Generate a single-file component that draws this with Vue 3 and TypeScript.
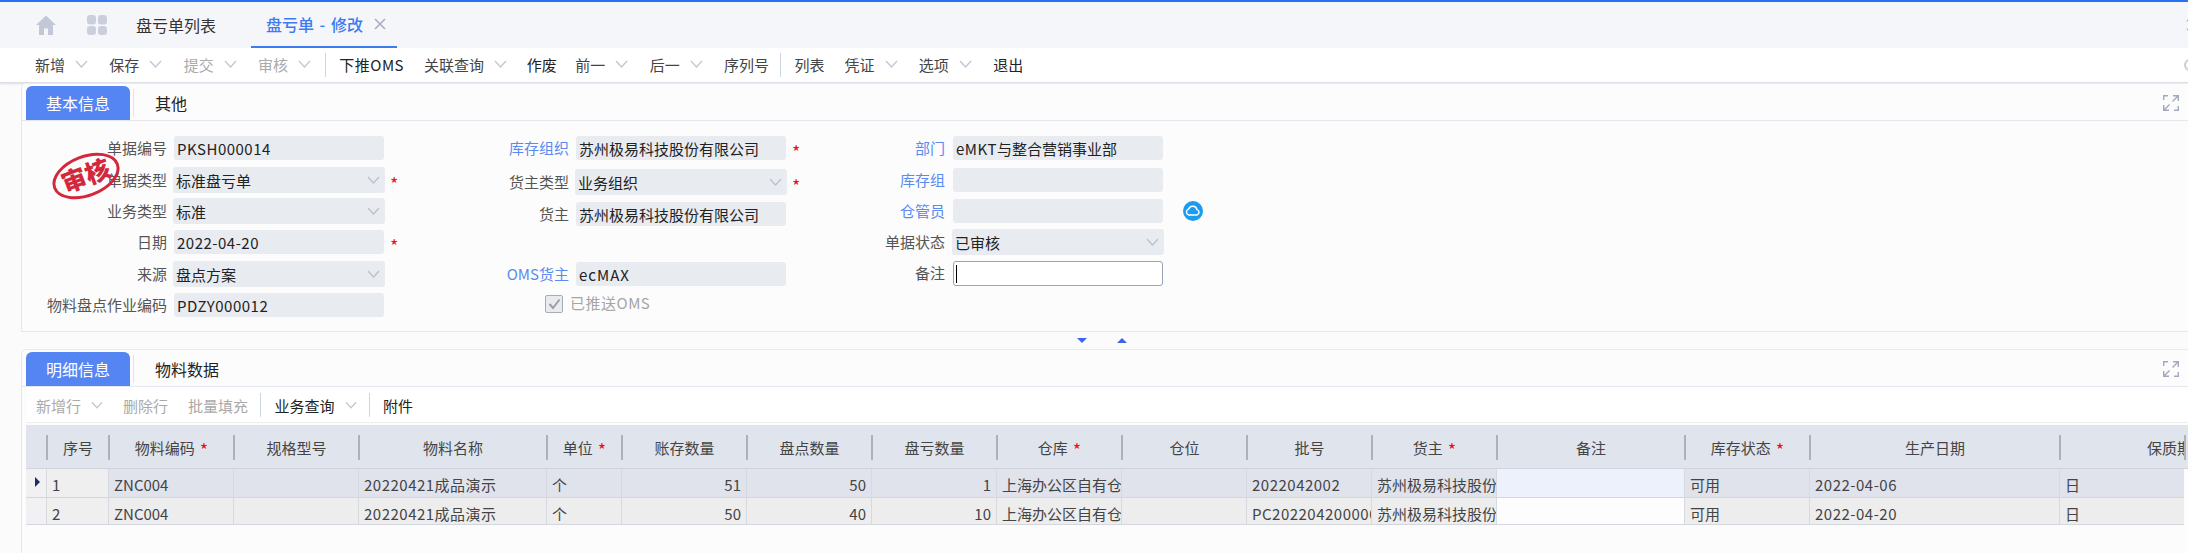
<script setup lang="ts">
interface ToolItem {
  text?: string
  caret?: boolean
  off?: boolean
  strong?: boolean
  wide?: boolean
  tight?: boolean
  sep?: boolean
}

interface Column {
  key: string
  title: string
  width: number
  req?: boolean
  right?: boolean
  wide?: boolean
}

type Row = Record<string, string>

const mainTools: ToolItem[] = [
  { text: '新增', caret: true },
  { text: '保存', caret: true },
  { text: '提交', caret: true, off: true },
  { text: '审核', caret: true, off: true },
  { sep: true },
  { text: '下推OMS', strong: true, wide: true },
  { text: '关联查询', caret: true, tight: true },
  { text: '作废', strong: true, tight: true },
  { text: '前一', caret: true },
  { text: '后一', caret: true },
  { text: '序列号', tight: true },
  { sep: true },
  { text: '列表' },
  { text: '凭证', caret: true },
  { text: '选项', caret: true },
  { text: '退出', strong: true },
]

const detailTools: ToolItem[] = [
  { text: '新增行', caret: true, off: true },
  { text: '删除行', off: true },
  { text: '批量填充', off: true },
  { sep: true },
  { text: '业务查询', caret: true, strong: true },
  { sep: true },
  { text: '附件', strong: true },
]

const columns: Column[] = [
  { key: 'no', title: '序号', width: 62 },
  { key: 'code', title: '物料编码', width: 125, req: true },
  { key: 'spec', title: '规格型号', width: 125 },
  { key: 'name', title: '物料名称', width: 188, wide: true },
  { key: 'unit', title: '单位', width: 75, req: true },
  { key: 'book', title: '账存数量', width: 125, right: true },
  { key: 'count', title: '盘点数量', width: 125, right: true },
  { key: 'loss', title: '盘亏数量', width: 125, right: true },
  { key: 'wh', title: '仓库', width: 125, req: true },
  { key: 'loc', title: '仓位', width: 125 },
  { key: 'batch', title: '批号', width: 125, wide: true },
  { key: 'owner', title: '货主', width: 125, req: true },
  { key: 'note', title: '备注', width: 188 },
  { key: 'status', title: '库存状态', width: 125, req: true },
  { key: 'made', title: '生产日期', width: 250, wide: true },
  { key: 'life', title: '保质期', width: 125 },
]

const rows: Row[] = [
  {
    no: '1', code: 'ZNC004', spec: '', name: '20220421成品演示', unit: '个', book: '51', count: '50', loss: '1',
    wh: '上海办公区自有仓库', loc: '', batch: '2022042002', owner: '苏州极易科技股份有限公司', note: '',
    status: '可用', made: '2022-04-06', life: '日',
  },
  {
    no: '2', code: 'ZNC004', spec: '', name: '20220421成品演示', unit: '个', book: '50', count: '40', loss: '10',
    wh: '上海办公区自有仓库', loc: '', batch: 'PC20220420000001', owner: '苏州极易科技股份有限公司', note: '',
    status: '可用', made: '2022-04-20', life: '日',
  },
]

const gridColumns = '20px ' + columns.map((c) => c.width + 'px').join(' ')
</script>

<template>
  <div class="page">
    <header class="topbar">
      <svg class="home" width="20" height="20" viewBox="0 0 20 20">
        <path d="M10 0.5 L20 10 L17 10 L17 20 L12 20 L12 13.5 L8 13.5 L8 20 L3 20 L3 10 L0 10 Z" fill="#c4c8d6" />
      </svg>
      <svg class="apps" width="20" height="20" viewBox="0 0 20 20">
        <rect x="0" y="0" width="9" height="9.5" rx="3" fill="#cbcfdb" />
        <rect x="11" y="0" width="9" height="9.5" rx="3" fill="#cbcfdb" />
        <rect x="0" y="11" width="9" height="9" rx="3" fill="#cbcfdb" />
        <rect x="11" y="11" width="9" height="9" rx="3" fill="#cbcfdb" />
      </svg>
      <span class="page-tab">盘亏单列表</span>
      <span class="page-tab active">
        盘亏单 - 修改
        <svg width="12" height="12" viewBox="0 0 12 12">
          <path d="M1 1 L11 11 M11 1 L1 11" stroke="#a9afc0" stroke-width="1.6" fill="none" />
        </svg>
      </span>
      <svg class="edge" width="8" height="12" viewBox="0 0 8 12">
        <path d="M1 1 L6 6 L1 11" stroke="#a9afc0" stroke-width="1.4" fill="none" />
      </svg>
    </header>

    <nav class="toolbar main-tools">
      <template v-for="(tool, i) in mainTools" :key="i">
        <i v-if="tool.sep" class="tool-sep" />
        <span v-else class="tool" :class="{ off: tool.off, strong: tool.strong, wide: tool.wide, tight: tool.tight }">
          {{ tool.text }}
          <svg v-if="tool.caret" class="caret" width="13" height="8" viewBox="0 0 13 8">
            <path d="M1 1 L6.5 7 L12 1" stroke="#c3c8d6" stroke-width="1.4" fill="none" />
          </svg>
        </span>
      </template>
      <i class="edge-ring" />
    </nav>

    <section class="panel">
      <div class="panel-tabs">
        <span class="panel-tab active">基本信息</span>
        <i class="tab-sep" />
        <span class="panel-tab">其他</span>
        <svg class="expand" width="16" height="16" viewBox="0 0 16 16">
          <path d="M0.7 5 V0.7 H5 M15.3 11 V15.3 H11" stroke="#a3a8bb" stroke-width="1.4" fill="none" />
          <path d="M10 0.7 H15.3 V6 M15 1 L9.5 6.5 M6 15.3 H0.7 V10 M1 15 L6.5 9.5" stroke="#a3a8bb" stroke-width="1.4" fill="none" />
        </svg>
      </div>

      <div class="form">
        <svg class="stamp" width="76" height="56" viewBox="0 0 76 56">
          <g transform="rotate(-21 38 28)">
            <ellipse cx="38" cy="28" rx="33.5" ry="19.5" fill="none" stroke="#d3283c" stroke-width="3" />
            <text x="38" y="37" text-anchor="middle" font-size="25" font-weight="900" fill="#d3283c" font-family="'Noto Sans CJK SC', sans-serif">审核</text>
          </g>
        </svg>

        <div class="col col-a">
          <div class="field"><label>单据编号</label><div class="input latin">PKSH000014</div></div>
          <div class="field">
            <label>单据类型</label>
            <div class="input select">标准盘亏单<svg width="13" height="8" viewBox="0 0 13 8"><path d="M1 1 L6.5 7 L12 1" stroke="#bcc1d0" stroke-width="1.4" fill="none" /></svg></div>
            <b class="star">*</b>
          </div>
          <div class="field">
            <label>业务类型</label>
            <div class="input select">标准<svg width="13" height="8" viewBox="0 0 13 8"><path d="M1 1 L6.5 7 L12 1" stroke="#bcc1d0" stroke-width="1.4" fill="none" /></svg></div>
          </div>
          <div class="field"><label>日期</label><div class="input latin">2022-04-20</div><b class="star">*</b></div>
          <div class="field">
            <label>来源</label>
            <div class="input select">盘点方案<svg width="13" height="8" viewBox="0 0 13 8"><path d="M1 1 L6.5 7 L12 1" stroke="#bcc1d0" stroke-width="1.4" fill="none" /></svg></div>
          </div>
          <div class="field"><label>物料盘点作业编码</label><div class="input latin">PDZY000012</div></div>
        </div>

        <div class="col col-b">
          <div class="field"><label class="link">库存组织</label><div class="input">苏州极易科技股份有限公司</div><b class="star">*</b></div>
          <div class="field">
            <label>货主类型</label>
            <div class="input select">业务组织<svg width="13" height="8" viewBox="0 0 13 8"><path d="M1 1 L6.5 7 L12 1" stroke="#bcc1d0" stroke-width="1.4" fill="none" /></svg></div>
            <b class="star">*</b>
          </div>
          <div class="field"><label>货主</label><div class="input">苏州极易科技股份有限公司</div></div>
          <div class="field" />
          <div class="field"><label class="link">OMS货主</label><div class="input latin-wide">ecMAX</div></div>
          <div class="check-row">
            <span class="check">
              <svg width="13" height="12" viewBox="0 0 13 12"><path d="M1.5 6 L5 10 L11.5 1.5" stroke="#9a9ea8" stroke-width="2" fill="none" /></svg>
            </span>
            <span class="check-text">已推送OMS</span>
          </div>
        </div>

        <div class="col col-c">
          <div class="field"><label class="link">部门</label><div class="input"><span><span class="latin">eMKT</span>与整合营销事业部</span></div></div>
          <div class="field"><label class="link">库存组</label><div class="input" /></div>
          <div class="field">
            <label class="link">仓管员</label>
            <div class="input" />
            <svg class="cloud" width="20" height="20" viewBox="0 0 20 20">
              <circle cx="10" cy="10" r="10" fill="#1c9cf0" />
              <path d="M6 14 A3 3 0 0 1 5.6 8.2 A4.4 4.4 0 0 1 14 8.6 A2.8 2.8 0 0 1 14 14 Z" fill="none" stroke="#fff" stroke-width="1.4" />
            </svg>
          </div>
          <div class="field">
            <label>单据状态</label>
            <div class="input select">已审核<svg width="13" height="8" viewBox="0 0 13 8"><path d="M1 1 L6.5 7 L12 1" stroke="#bcc1d0" stroke-width="1.4" fill="none" /></svg></div>
          </div>
          <div class="field">
            <label>备注</label>
            <div class="input editing"><i class="cursor" /></div>
          </div>
        </div>
      </div>
    </section>

    <div class="splitter">
      <i class="tri down" />
      <i class="tri up" />
    </div>

    <section class="panel detail">
      <div class="panel-tabs">
        <span class="panel-tab active">明细信息</span>
        <i class="tab-sep" />
        <span class="panel-tab">物料数据</span>
        <svg class="expand" width="16" height="16" viewBox="0 0 16 16">
          <path d="M0.7 5 V0.7 H5 M15.3 11 V15.3 H11" stroke="#a3a8bb" stroke-width="1.4" fill="none" />
          <path d="M10 0.7 H15.3 V6 M15 1 L9.5 6.5 M6 15.3 H0.7 V10 M1 15 L6.5 9.5" stroke="#a3a8bb" stroke-width="1.4" fill="none" />
        </svg>
      </div>

      <nav class="toolbar detail-tools">
        <template v-for="(tool, i) in detailTools" :key="i">
          <i v-if="tool.sep" class="tool-sep" />
          <span v-else class="tool" :class="{ off: tool.off, strong: tool.strong }">
            {{ tool.text }}
            <svg v-if="tool.caret" class="caret" width="13" height="8" viewBox="0 0 13 8">
              <path d="M1 1 L6.5 7 L12 1" stroke="#c3c8d6" stroke-width="1.4" fill="none" />
            </svg>
          </span>
        </template>
      </nav>

      <div class="grid">
        <div class="grid-head" :style="{ gridTemplateColumns: gridColumns + ' 3px' }">
          <div class="head-gutter" />
          <div v-for="col in columns" :key="col.key" class="head-cell" :class="{ last: col.key === 'life' }">
            {{ col.title }}<b v-if="col.req" class="req">*</b>
          </div>
          <div class="head-cell tail" />
        </div>
        <div
          v-for="(row, r) in rows"
          :key="r"
          class="grid-row"
          :class="{ current: r === 0 }"
          :style="{ gridTemplateColumns: gridColumns }"
        >
          <div class="gutter"><i v-if="r === 0" class="pointer" /></div>
          <div
            v-for="col in columns"
            :key="col.key"
            class="cell"
            :class="[{ right: col.right, wide: col.wide }, 'c-' + col.key]"
          >{{ row[col.key] }}</div>
        </div>
      </div>
    </section>
  </div>
</template>

<style>
html,
body {
  margin: 0;
  overflow: hidden;
  background: #fbfbfc;
}
</style>

<style scoped>
.page {
  width: 2188px;
  height: 553px;
  overflow: hidden;
  background: #fbfbfc;
  font-family: "Noto Sans CJK SC", "Noto Sans", sans-serif;
  font-size: 15px;
  color: #333;
}

/* top bar */
.topbar {
  display: flex;
  align-items: center;
  box-sizing: border-box;
  border-top: 2px solid #2b6ff2;
  height: 48px;
  background: #f5f6fa;
  padding-left: 36px;
  overflow: hidden;
}

.apps {
  margin-left: 31px;
}

.page-tab {
  display: flex;
  align-items: center;
  height: 46px;
  box-sizing: border-box;
  font-size: 16px;
  color: #333;
  margin-left: 29px;
}

.page-tab.active {
  margin-left: 35px;
  padding: 0 11px 0 15px;
  color: #3b7cf2;
  font-weight: 500;
  border-bottom: 2px solid #3b7cf2;
  word-spacing: 2px;
}

.page-tab.active svg {
  margin-left: 11px;
}

.edge {
  margin-left: auto;
  margin-right: -6px;
}

/* toolbars */
.toolbar {
  display: flex;
  align-items: center;
  background: #fff;
  overflow: hidden;
}

.main-tools {
  height: 34px;
  box-sizing: content-box;
  padding-left: 25px;
  border-bottom: 1px solid #dcdfe6;
  box-shadow: 0 1px 2px rgba(120, 130, 150, 0.25);
}

.main-tools .tool {
  padding-bottom: 2px;
}

.tool {
  display: flex;
  align-items: center;
  padding: 0 10px;
  white-space: nowrap;
  color: #444;
}

.tool.strong {
  color: #222;
}

.tool.off {
  color: #aaa;
}

.tool.wide {
  letter-spacing: 0.5px;
}

.main-tools .tool.tight {
  padding-right: 8.5px;
}

.caret {
  margin: 0 1.3px 0 10px;
}

.tool-sep {
  width: 1px;
  height: 24px;
  margin: 0 3px;
  background: #ccd5e2;
}

.edge-ring {
  width: 12px;
  height: 12px;
  margin-left: auto;
  margin-right: -8px;
  box-sizing: border-box;
  border: 2px solid #c8ccd6;
  border-radius: 50%;
}

/* panels */
.panel {
  margin-left: 21px;
  box-sizing: border-box;
  border-left: 1px solid #e3e7f1;
  border-top: 1px solid #e8ebf1;
  border-bottom: 1px solid #e5e8f0;
  border-top-left-radius: 5px;
  padding-top: 2px;
  background: #fcfcfd;
}

.panel-tabs {
  display: flex;
  align-items: center;
  height: 34px;
  padding-left: 4px;
  box-shadow: 0 1px 0 #e4e7ee;
}

.panel-tab {
  font-size: 16px;
  color: #222;
  margin-left: 21px;
}

.panel-tab.active {
  width: 104px;
  height: 34px;
  line-height: 34px;
  margin-left: 0;
  text-align: center;
  border-radius: 6px 6px 0 0;
  background: #5585f3;
  color: #fff;
}

.tab-sep {
  width: 1px;
  height: 28px;
  margin-left: 3px;
  background: #e0e3ea;
}

.expand {
  margin-left: auto;
  margin-right: 9px;
}

/* form */
.form {
  position: relative;
  display: flex;
  height: 211px;
  box-sizing: border-box;
  padding: 16px 0 0 5px;
}

.stamp {
  position: absolute;
  left: 26px;
  top: 28px;
  z-index: 2;
}

.col {
  display: grid;
  align-items: start;
}

.col-a {
  width: 383px;
  grid-template-rows: 31px 31px 32px 31px 32px 24px;
}

.col-b {
  width: 390px;
  grid-template-rows: 33px 33px 30px 30px 33px 18px;
}

.col-c {
  grid-template-rows: 32px 31px 30px 32px 26px;
}

.field {
  display: flex;
  align-items: center;
}

label {
  flex: none;
  margin-bottom: 2px;
  text-align: right;
  color: #555;
  white-space: nowrap;
}

label.link {
  color: #5b8af0;
}

.col-a label {
  width: 140px;
  margin-right: 7px;
}

.col-b label {
  width: 159px;
  margin-right: 7px;
}

.col-c label {
  width: 145px;
  margin-right: 8px;
}

.input {
  flex: none;
  display: flex;
  align-items: center;
  justify-content: space-between;
  width: 210px;
  height: 24px;
  box-sizing: border-box;
  padding: 0 3px;
  border-radius: 3px;
  background: #e8ebf0;
  color: #222;
  white-space: nowrap;
}

.latin {
  letter-spacing: 0.5px;
}

.latin-wide {
  letter-spacing: 1px;
}

.input.select {
  width: 212px;
  height: 26px;
  margin: 0 -1px;
  padding-right: 5px;
}

.input.editing {
  height: 25px;
  background: #fff;
  border: 1px solid #98a3b8;
  padding-left: 2px;
}

.cursor {
  width: 1px;
  height: 18px;
  background: #000;
}

.star {
  margin-left: 6px;
  font-size: 18px;
  line-height: 20px;
  font-weight: normal;
  color: #f01010;
  transform: translateY(3px);
}

.cloud {
  margin-left: 20px;
}

.check-row {
  display: flex;
  align-items: center;
  height: 18px;
  padding-left: 135px;
  color: #a5a5a5;
  white-space: nowrap;
}

.check-text {
  margin-bottom: 3px;
  letter-spacing: 0.5px;
}

.check {
  display: flex;
  align-items: center;
  justify-content: center;
  width: 18px;
  height: 18px;
  box-sizing: border-box;
  margin-right: 7px;
  border: 1px solid #a8acb5;
  border-radius: 2px;
  background: #e9ebef;
}

/* splitter */
.splitter {
  display: flex;
  align-items: center;
  gap: 30px;
  height: 17px;
  padding-left: 1077px;
}

.tri {
  width: 0;
  height: 0;
  border-left: 5px solid transparent;
  border-right: 5px solid transparent;
}

.tri.down {
  border-top: 5px solid #3d64e8;
}

.tri.up {
  border-bottom: 5px solid #3d64e8;
}

/* detail */
.detail {
  height: 204px;
  border-bottom: 0;
}

.detail-tools {
  height: 36px;
  margin: 1px 0 0 4px;
  padding-top: 1px;
  box-sizing: border-box;
  border-bottom: 1px solid #eee;
}

.detail-tools .caret {
  width: 12px;
  margin-right: 0;
}

.detail-tools .tool-sep {
  margin: 0 3.5px 0 2px;
}

.grid {
  margin: 2px 0 0 4px;
  width: 2162px;
  overflow: hidden;
}

.grid-head,
.grid-row {
  display: grid;
  white-space: nowrap;
}

.grid-head {
  height: 44px;
  box-sizing: border-box;
  border-bottom: 1px solid #d1d4dc;
  background: #e0e4ed;
  align-items: center;
}

.head-cell {
  height: 25px;
  box-sizing: border-box;
  margin-top: 1px;
  border-left: 2px solid #adb1bb;
  text-align: center;
  line-height: 26px;
  color: #444;
}

.head-cell.last {
  padding-left: 86px;
  text-align: left;
  overflow: hidden;
}

.req {
  margin-left: 5px;
  font-size: 18px;
  line-height: 1;
  vertical-align: -3px;
  font-weight: normal;
  color: #f01010;
}

.grid-row {
  height: 27px;
  width: 2158px;
  overflow: hidden;
  box-sizing: border-box;
  border-bottom: 1px solid #d3d6de;
  background: #ededed;
}

.grid-row.current {
  height: 29px;
  background: #e0e3ec;
}

.gutter {
  display: flex;
  align-items: center;
  padding-left: 9px;
  box-sizing: border-box;
  background: #f1f1f4;
}

.pointer {
  width: 0;
  height: 0;
  border-top: 5px solid transparent;
  border-bottom: 5px solid transparent;
  border-left: 5px solid #1c2f5f;
  margin-bottom: 2px;
}

.cell {
  box-sizing: border-box;
  padding: 3px 0 0 5px;
  border-left: 1px solid #d6d9e0;
  line-height: 25px;
  color: #444;
  overflow: hidden;
}

.cell.wide {
  letter-spacing: 0.5px;
}

.grid-row .c-no {
  background: #efefef;
}

.grid-row .c-note {
  background: #fdfdfd;
}

.grid-row.current .c-note {
  background: #edf1fb;
}

.cell.right {
  padding: 3px 5px 0 0;
  text-align: right;
}
</style>
